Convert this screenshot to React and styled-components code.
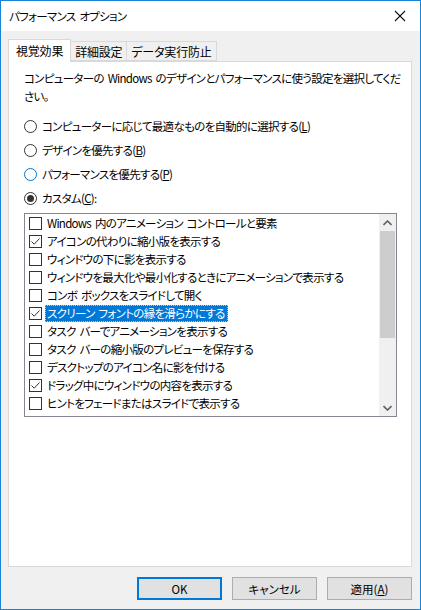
import React from "react";
import styled, { createGlobalStyle } from "styled-components";

const GlobalStyle = createGlobalStyle`
	html, body {
		margin: 0;
		padding: 0;
		background: #ffffff;
	}
	* {
		box-sizing: border-box;
	}
`;

const items = [
	{ label: "Windows 内のアニメーション コントロールと要素", checked: false },
	{ label: "アイコンの代わりに縮小版を表示する", checked: true },
	{ label: "ウィンドウの下に影を表示する", checked: false },
	{ label: "ウィンドウを最大化や最小化するときにアニメーションで表示する", checked: false },
	{ label: "コンボ ボックスをスライドして開く", checked: false },
	{ label: "スクリーン フォントの縁を滑らかにする", checked: true, selected: true },
	{ label: "タスク バーでアニメーションを表示する", checked: false },
	{ label: "タスク バーの縮小版のプレビューを保存する", checked: false },
	{ label: "デスクトップのアイコン名に影を付ける", checked: false },
	{ label: "ドラッグ中にウィンドウの内容を表示する", checked: true },
	{ label: "ヒントをフェードまたはスライドで表示する", checked: false },
];

const radios = [
	{ label: "コンピューターに応じて最適なものを自動的に選択する", key: "L" },
	{ label: "デザインを優先する", key: "B" },
	{ label: "パフォーマンスを優先する", key: "P", hover: true },
	{ label: "カスタム", key: "C", checked: true, colon: true },
];

const App = () => {
	return (
		<>
			<GlobalStyle />
			<Window>
				<TitleBar>
					<Title>パフォーマンス オプション</Title>
					<Close>
						<svg width="12" height="12" viewBox="0 0 12 12">
							<path d="M1 1 L11 11 M11 1 L1 11" stroke="#111" strokeWidth="1.1" />
						</svg>
					</Close>
				</TitleBar>
				<Body>
					<Tabs>
						<Tab active>視覚効果</Tab>
						<Tab>詳細設定</Tab>
						<Tab>データ実行防止</Tab>
					</Tabs>
					<Panel>
						<Desc>
							コンピューターの Windows のデザインとパフォーマンスに使う設定を選択してくだ
							<br />
							さい。
						</Desc>
						<RadioGroup>
							{radios.map((r) => (
								<RadioRow key={r.key}>
									<RadioDot checked={r.checked} hover={r.hover} />
									<span>
										{r.label}(<u>{r.key}</u>){r.colon ? ":" : ""}
									</span>
								</RadioRow>
							))}
						</RadioGroup>
						<ListBox>
							<List>
								{items.map((it) => (
									<Row key={it.label}>
										<Check>
											{it.checked && (
												<svg width="11" height="11" viewBox="0 0 11 11">
													<path
														d="M1.5 5.5 L4.2 8.2 L9.5 2.5"
														fill="none"
														stroke="#333"
														strokeWidth="1"
													/>
												</svg>
											)}
										</Check>
										<Label selected={it.selected}>{it.label}</Label>
									</Row>
								))}
							</List>
							<ScrollBar>
								<Arrow>
									<svg width="9" height="6" viewBox="0 0 9 6">
										<path d="M0.5 5 L4.5 1 L8.5 5" fill="none" stroke="#606060" strokeWidth="1.6" />
									</svg>
								</Arrow>
								<Track>
									<Thumb />
								</Track>
								<Arrow>
									<svg width="9" height="6" viewBox="0 0 9 6">
										<path d="M0.5 1 L4.5 5 L8.5 1" fill="none" stroke="#606060" strokeWidth="1.6" />
									</svg>
								</Arrow>
							</ScrollBar>
						</ListBox>
					</Panel>
					<Buttons>
						<Button primary>OK</Button>
						<Button>キャンセル</Button>
						<Button>
							適用(<u>A</u>)
						</Button>
					</Buttons>
				</Body>
			</Window>
		</>
	);
};

export default App;

const Window = styled.div`
	width: 421px;
	height: 610px;
	border: 1px solid #1883d7;
	display: flex;
	flex-direction: column;
	font-family: "Noto Sans CJK JP", "Noto Sans", sans-serif;
	font-feature-settings: "palt";
	font-size: 11.5px;
	letter-spacing: -0.7px;
	word-spacing: 2px;
	color: #000;
`;

const TitleBar = styled.div`
	height: 30px;
	background: #ffffff;
	display: flex;
	align-items: center;
	justify-content: space-between;
	padding: 0 14px 0 8px;
`;

const Title = styled.div`
	font-size: 11.5px;
`;

const Close = styled.div`
	width: 12px;
	height: 12px;
	display: flex;
`;

const Body = styled.div`
	flex: 1;
	background: #f0f0f0;
	padding: 8px 8px 0 7px;
	display: flex;
	flex-direction: column;
`;

const Tabs = styled.div`
	display: flex;
	align-items: flex-end;
	height: 22px;
	position: relative;
	z-index: 1;
	font-size: 12px;
	letter-spacing: -0.2px;
`;

const Tab = styled.div`
	height: ${({ active }) => (active ? "23px" : "20px")};
	margin-bottom: ${({ active }) => (active ? "-1px" : "0")};
	padding: ${({ active }) => (active ? "0 7px 2px 7px" : "0 4px")};
	border: 1px solid #d9d9d9;
	border-bottom: ${({ active }) => (active ? "none" : "1px solid #d9d9d9")};
	margin-left: ${({ active }) => (active ? "0" : "-1px")};
	background: ${({ active }) => (active ? "#ffffff" : "#f0f0f0")};
	display: flex;
	align-items: center;
	&:first-child {
		margin-left: 0;
	}
`;

const Panel = styled.div`
	height: 506px;
	background: #ffffff;
	border: 1px solid #d9d9d9;
	padding: 7px 15px 0 15px;
	display: flex;
	flex-direction: column;
`;

const Desc = styled.div`
	line-height: 18px;
	white-space: nowrap;
`;

const RadioGroup = styled.div`
	display: flex;
	flex-direction: column;
	gap: 6px;
	margin-top: 12px;
`;

const RadioRow = styled.div`
	display: flex;
	align-items: center;
	height: 18px;
	gap: 5px;
	u {
		text-decoration: underline;
	}
`;

const RadioDot = styled.div`
	width: 13px;
	height: 13px;
	border-radius: 50%;
	border: 1px solid ${({ hover }) => (hover ? "#0078d7" : "#333333")};
	background: #ffffff;
	position: relative;
	flex-shrink: 0;
	&::after {
		content: "";
		display: ${({ checked }) => (checked ? "block" : "none")};
		position: absolute;
		left: 2px;
		top: 2px;
		width: 7px;
		height: 7px;
		border-radius: 50%;
		background: #333333;
	}
`;

const ListBox = styled.div`
	margin-top: 6px;
	width: 373px;
	height: 204px;
	border: 1px solid #828790;
	display: flex;
`;

const List = styled.div`
	flex: 1;
	display: flex;
	flex-direction: column;
	overflow: hidden;
`;

const Row = styled.div`
	height: 18px;
	display: flex;
	align-items: center;
	padding-left: 4px;
	flex-shrink: 0;
`;

const Check = styled.div`
	width: 13px;
	height: 13px;
	border: 1px solid #333333;
	background: #ffffff;
	display: flex;
	align-items: center;
	justify-content: center;
	flex-shrink: 0;
`;

const Label = styled.div`
	margin-left: 3px;
	padding: 0 2px 0 1px;
	height: 17px;
	line-height: 15px;
	white-space: nowrap;
	background: ${({ selected }) => (selected ? "#0078d7" : "transparent")};
	color: ${({ selected }) => (selected ? "#ffffff" : "#000000")};
	border: 1px ${({ selected }) => (selected ? "dotted #f5c26b" : "solid transparent")};
`;

const ScrollBar = styled.div`
	width: 17px;
	background: #f0f0f0;
	display: flex;
	flex-direction: column;
`;

const Arrow = styled.div`
	height: 17px;
	display: flex;
	align-items: center;
	justify-content: center;
`;

const Track = styled.div`
	flex: 1;
	padding: 0 1px;
`;

const Thumb = styled.div`
	height: 107px;
	background: #cdcdcd;
`;

const Buttons = styled.div`
	display: flex;
	justify-content: flex-end;
	gap: 10px;
	margin-top: 10px;
	letter-spacing: 0;
	word-spacing: 0;
`;

const Button = styled.div`
	width: 85px;
	height: 23px;
	background: #e1e1e1;
	border: ${({ primary }) => (primary ? "2px solid #0078d7" : "1px solid #adadad")};
	display: flex;
	align-items: center;
	justify-content: center;
	u {
		text-decoration: underline;
	}
`;
